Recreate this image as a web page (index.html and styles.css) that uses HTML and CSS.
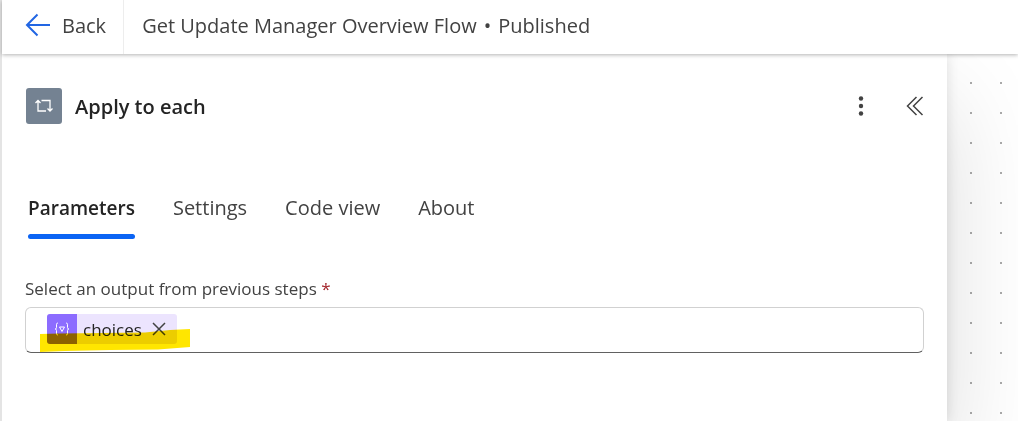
FILE: index.html
```html
<!DOCTYPE html>
<html lang="en">
<head>
<meta charset="utf-8">
<meta name="viewport" content="width=device-width, initial-scale=1">
<title>Get Update Manager Overview Flow</title>
<link rel="stylesheet" href="styles.css">
</head>
<body>
<div class="app">
  <header class="topbar">
    <button class="back" type="button">
      <svg class="back-icon" width="26" height="24" viewBox="0 0 26 24" aria-hidden="true"><path d="M12.5 1.500 2 12l10.500 10.500M2 12h23"/></svg>
      <span>Back</span>
    </button>
    <h1 class="flow-name"><span>Get Update Manager Overview Flow</span> <span>•</span> <span>Published</span></h1>
  </header>
  <main class="workspace">
    <section class="panel">
      <div class="panel-head">
        <span class="op-icon">
          <svg width="20" height="14" viewBox="0 0 20 14" aria-hidden="true"><path d="M4 1.500V12h8M1.500 4 4 1.500 6.500 4M7.500 1.500H16V12M13.500 9.500 16 12l2.500-2.500"/></svg>
        </span>
        <h2 class="panel-title">Apply to each</h2>
        <button class="icon-button" type="button" aria-label="More options">
          <svg width="20" height="20" viewBox="0 0 20 20" aria-hidden="true"><circle cx="10" cy="2.500" r="2.200"/><circle cx="10" cy="10" r="2.200"/><circle cx="10" cy="17.500" r="2.200"/></svg>
        </button>
        <button class="icon-button collapse" type="button" aria-label="Collapse panel">
          <svg width="18" height="20" viewBox="0 0 18 20" aria-hidden="true"><path d="M10.500 1 1.500 10l9 9M16.500 1l-9 9 9 9"/></svg>
        </button>
      </div>
      <div class="tabs" role="tablist">
        <button class="tab selected" type="button" role="tab" aria-selected="true">Parameters</button>
        <button class="tab" type="button" role="tab" aria-selected="false">Settings</button>
        <button class="tab" type="button" role="tab" aria-selected="false">Code view</button>
        <button class="tab" type="button" role="tab" aria-selected="false">About</button>
      </div>
      <div class="form">
        <label class="label" for="output">Select an output from previous steps <span class="required">*</span></label>
        <div class="field">
          <span class="token">
            <span class="token-icon">
              <svg width="16" height="14" viewBox="0 0 16 14" aria-hidden="true"><path d="M4 1C2.500 1 2.500 2 2.500 3v2.500C2.500 6.500 2 7 1 7c1 0 1.500.5 1.500 1.500V11c0 1 0 2 1.500 2M12 1c1.500 0 1.500 1 1.500 2v2.500c0 1 .5 1.500 1.500 1.500-1 0-1.500.5-1.500 1.500V11c0 1 0 2-1.500 2M5.500 5h5L8 9.500z"/></svg>
            </span>
            <span class="token-text">choices</span>
            <button class="token-remove" type="button" aria-label="Remove choices">
              <svg width="14" height="14" viewBox="0 0 14 14" aria-hidden="true"><path d="m1 1 12 12M13 1 1 13"/></svg>
            </button>
          </span>
          <input class="field-input" id="output" type="text" required>
          <svg class="marker" width="150" height="24" viewBox="0 0 150 24" aria-hidden="true"><path d="M0 5 20 4.500 105 3.500 130 1 150 0V18L118 20.500 70 21 25 22 0 23z"/></svg>
        </div>
      </div>
    </section>
  </main>
</div>
</body>
</html>
```
FILE: styles.css
```css
* {
  box-sizing: border-box;
}

body {
  margin: 0;
  font-family: "Segoe UI", "Open Sans", "Noto Sans", sans-serif;
  color: #424242;
  background: #fff;
}

button {
  padding: 0;
  border: 0;
  background: none;
  color: inherit;
  font: inherit;
}

svg {
  display: block;
  fill: none;
}

.app {
  display: flex;
  flex-direction: column;
  min-height: 100vh;
  border-left: 2px solid #e4e4e4;
}

.topbar {
  position: relative;
  z-index: 1;
  display: flex;
  height: 54px;
  background: #fff;
  box-shadow: 0 1px 4px rgba(0, 0, 0, 0.3);
}

.back {
  display: flex;
  align-items: center;
  gap: 11px;
  padding: 0 17px 4px 23px;
  border-right: 1px solid #ededed;
  font-size: 20px;
}

.back-icon {
  stroke: #2266e3;
  stroke-width: 2;
}

.flow-name {
  display: flex;
  gap: 7px;
  margin: 0;
  padding-left: 18px;
  font-size: 20px;
  font-weight: 400;
  line-height: 52px;
}

.workspace {
  flex: 1;
  display: flex;
  overflow: hidden;
  background: radial-gradient(circle, #aaa 1px, transparent 1px) 24px 14px / 30px 30px;
}

.panel {
  flex: 1;
  margin-right: 71px;
  padding: 34px 23px;
  background: #fff;
  box-shadow: 0 0 12px rgba(0, 0, 0, 0.12), 0 48px 96px rgba(0, 0, 0, 0.14);
}

.panel-head {
  display: flex;
  align-items: center;
  height: 36px;
}

.op-icon {
  display: grid;
  place-items: center;
  width: 36px;
  height: 36px;
  margin-left: 1px;
  border-radius: 3px;
  background: #748292;
  stroke: #fff;
  stroke-width: 1.300;
}

.panel-title {
  flex: 1;
  margin: 0 0 0 13px;
  color: #242424;
  font-size: 20px;
  font-weight: 600;
}

.icon-button {
  fill: #424242;
}

.icon-button svg {
  fill: inherit;
}

.collapse {
  margin-left: 35px;
  fill: none;
  stroke: #424242;
  stroke-width: 1.500;
}

.tabs {
  display: flex;
  align-items: flex-start;
  gap: 38px;
  margin-top: 68px;
  padding-left: 3px;
}

.tab {
  font-size: 20px;
  line-height: 32px;
}

.tab.selected {
  color: #242424;
  font-size: 19px;
  font-weight: 600;
}

.tab.selected::after {
  content: "";
  display: block;
  height: 5px;
  margin-top: 10px;
  border-radius: 3px;
  background: #0b64f4;
}

.form {
  margin-top: 38px;
}

.label {
  display: block;
  font-size: 17px;
  line-height: 24px;
}

.required {
  color: #a4262c;
}

.field {
  position: relative;
  display: flex;
  align-items: center;
  height: 46px;
  margin-top: 6px;
  padding: 0 21px 2px;
  border: 1px solid #d1d1d1;
  border-bottom-color: #616161;
  border-radius: 6px;
}

.token {
  display: flex;
  align-items: center;
  height: 30px;
  padding-right: 11px;
  border-radius: 3px;
  overflow: hidden;
  background: #ece4fe;
  color: #242424;
  font-size: 17px;
}

.token-icon {
  display: grid;
  place-items: center;
  width: 30px;
  height: 30px;
  background: #8c6cff;
  stroke: #fff;
}

.token-text {
  margin-left: 6px;
}

.token-remove {
  margin-left: 10px;
  stroke: #424242;
  stroke-width: 1.500;
}

.field-input {
  flex: 1;
  min-width: 0;
  border: 0;
  outline: 0;
  background: none;
  font: inherit;
}

.marker {
  position: absolute;
  top: 21px;
  left: 14px;
  fill: #ffe600;
  mix-blend-mode: multiply;
  pointer-events: none;
}
```
